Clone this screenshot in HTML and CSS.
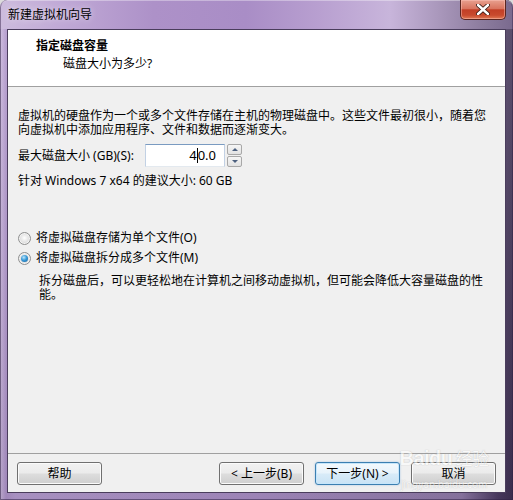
FILE: index.html
```html
<!DOCTYPE html>
<html lang="zh-CN">
<head>
<meta charset="utf-8">
<title>新建虚拟机向导</title>
<link rel="stylesheet" href="styles.css">
</head>
<body>
<div class="window">
  <div class="titlebar">
    <span class="title">新建虚拟机向导</span>
    <button class="close" type="button" aria-label="关闭">
      <svg width="14" height="11" viewBox="0 0 14 11"><path d="M2 1 L12 10 M12 1 L2 10" stroke="#3a1a14" stroke-width="4.2" stroke-linecap="round"/><path d="M2 1 L12 10 M12 1 L2 10" stroke="#ffffff" stroke-width="2.4" stroke-linecap="round"/></svg>
    </button>
  </div>
  <div class="client">
    <div class="header">
      <div class="h-title">指定磁盘容量</div>
      <div class="h-sub">磁盘大小为多少?</div>
    </div>
    <div class="body">
      <p class="para">虚拟机的硬盘作为一个或多个文件存储在主机的物理磁盘中。这些文件最初很小，随着您向虚拟机中添加应用程序、文件和数据而逐渐变大。</p>
      <div class="size-row">
        <label class="size-label">最大磁盘大小 (GB)(S):</label>
        <div class="spin">
          <div class="spin-input">4<span class="caret"></span>0.0</div>
          <div class="spin-btns">
            <span class="spin-btn"><i class="tri up"></i></span>
            <span class="spin-btn"><i class="tri down"></i></span>
          </div>
        </div>
      </div>
      <div class="recommend">针对 Windows 7 x64 的建议大小: 60 GB</div>
      <div class="radio-row first"><span class="radio"></span><span>将虚拟磁盘存储为单个文件(O)</span></div>
      <div class="radio-row second"><span class="radio checked"></span><span>将虚拟磁盘拆分成多个文件(M)</span></div>
      <p class="desc">拆分磁盘后，可以更轻松地在计算机之间移动虚拟机，但可能会降低大容量磁盘的性能。</p>
    </div>
    <div class="footer">
      <button class="btn" type="button">帮助</button>
      <div class="spacer"></div>
      <button class="btn" type="button">&lt; 上一步(B)</button>
      <button class="btn default" type="button">下一步(N) &gt;</button>
      <button class="btn" type="button">取消</button>
    </div>
  </div>
  <div class="watermark" aria-hidden="true">
    <span class="wm-big">Bai<span class="wm-du">du</span><span class="wm-cn">经验</span></span>
    <span class="wm-small">jingyan.baidu.com</span>
  </div>
</div>
</body>
</html>
```

FILE: styles.css
```css
* { box-sizing: border-box; }
html, body { margin: 0; padding: 0; background: #dcdcdc; }
body {
  font-family: "Noto Sans", "Noto Sans CJK SC", sans-serif;
  font-size: 12px;
  line-height: 14px;
  color: #000;
}
.window {
  position: relative;
  width: 513px;
  height: 500px;
  padding: 0 7px 7px 7px;
  display: flex;
  flex-direction: column;
  border-radius: 7px 7px 0 0;
  background:
    linear-gradient(to bottom, rgba(255,255,255,0.15), rgba(0,0,0,0.08)),
    linear-gradient(to right, #c9b6dc 0, #ad92c9 1.2%, #b59cd0 3%, #a98ec5 50%, #8f7aa8 90%, #4c3c63 97%, #3e3052 100%);
  box-shadow: inset 0 0 0 1px rgba(50,35,70,0.55);
  overflow: hidden;
}
.titlebar {
  height: 29px;
  margin: 0 -7px;
  padding: 0 7px 0 8px;
  display: flex;
  justify-content: space-between;
  align-items: flex-start;
  background: linear-gradient(to right, #cdbcdd 0%, #c0a9d6 12%, #ad91c8 30%, #a98dc6 48%, #b89fd0 62%, #c8b5db 76%, #a896ba 86%, #8c7c9e 94%, #7a6a8e 100%);
  border-radius: 7px 7px 0 0;
  box-shadow: inset 0 1px 0 rgba(255,255,255,0.35), inset 1px 0 0 rgba(60,40,80,0.5), inset -1px 0 0 rgba(60,40,80,0.5);
}
.title {
  padding-top: 8px;
  line-height: 14px;
  text-shadow: 0 0 6px rgba(255,255,255,0.7);
}
.close {
  width: 46px;
  height: 20px;
  padding: 0;
  border: 1px solid #5a2620;
  border-top: none;
  border-radius: 0 0 5px 5px;
  background: linear-gradient(to bottom, #e8a08f 0%, #d9745f 45%, #c23f26 52%, #c84a2e 80%, #e07a55 100%);
  box-shadow: inset 0 0 0 1px rgba(255,200,190,0.45);
  display: flex;
  align-items: center;
  justify-content: center;
}
.client {
  flex: 1;
  display: flex;
  flex-direction: column;
  background: #f0f0f0;
  border: 1px solid #4a3d5c;
}
.header {
  height: 57px;
  background: #fff;
  border-bottom: 1px solid #a0a0a0;
  padding: 8px 0 0 28px;
}
.h-title {
  font-weight: 700;
  line-height: 15px;
}
.h-sub {
  margin-top: 3px;
  padding-left: 27px;
  line-height: 15px;
}
.body {
  padding: 22px 0 0 10px;
}
.para {
  margin: 0;
  width: 474px;
}
.size-row {
  margin-top: 7px;
  display: flex;
  align-items: center;
}
.size-label {
  width: 127px;
  white-space: nowrap;
}
.spin {
  display: flex;
  align-items: stretch;
  height: 23px;
}
.spin-input {
  width: 80px;
  border: 1px solid #abadb3;
  border-top-color: #7a9bc1;
  border-left-color: #c2d1e4;
  border-right-color: #c2d1e4;
  border-bottom-color: #e3e9ef;
  background: #fff;
  text-align: right;
  padding: 3px 8px 0 0;
  line-height: 15px;
  font-size: 13px;
  font-family: "Noto Sans", sans-serif;
}
.caret {
  display: inline-block;
  width: 1px;
  height: 15px;
  background: #000;
  vertical-align: -3px;
}
.spin-btns {
  margin-left: 2px;
  width: 15px;
  display: flex;
  flex-direction: column;
  gap: 1px;
}
.spin-btn {
  flex: 1;
  border: 1px solid #a8a8a8;
  border-radius: 2px;
  background: linear-gradient(to bottom, #f6f6f6, #e2e2e2);
  display: flex;
  align-items: center;
  justify-content: center;
}
.tri {
  width: 0;
  height: 0;
  border-left: 3px solid transparent;
  border-right: 3px solid transparent;
}
.tri.up { border-bottom: 3px solid #4c607f; }
.tri.down { border-top: 3px solid #4c607f; }
.recommend {
  margin-top: 7px;
}
.radio-row {
  display: flex;
  align-items: center;
  gap: 5px;
  height: 14px;
}
.radio-row.first { margin-top: 43px; }
.radio-row.second { margin-top: 6px; }
.radio {
  width: 13px;
  height: 13px;
  border-radius: 50%;
  border: 1px solid #8e8f8f;
  background: radial-gradient(circle at 50% 45%, #ffffff 0, #e6e6e6 45%, #c9c9c9 100%);
  box-shadow: inset 0 0 0 1px #f4f4f4;
  display: flex;
  align-items: center;
  justify-content: center;
  flex: none;
}
.radio.checked::after {
  content: "";
  width: 7px;
  height: 7px;
  border-radius: 50%;
  background: radial-gradient(circle at 40% 35%, #bfe6fb 0, #3a9bd8 45%, #0f5d9b 100%);
}
.desc {
  margin: 9px 0 0 21px;
  width: 452px;
}
.footer {
  margin-top: auto;
  border-top: 1px solid #a0a0a0;
  padding: 8px 9px 7px 9px;
  display: flex;
  gap: 11px;
}
.spacer { flex: 1; }
.btn {
  width: 85px;
  height: 23px;
  padding: 0;
  font: inherit;
  line-height: 14px;
  color: #000;
  border: 1px solid #707070;
  border-radius: 3px;
  background: linear-gradient(to bottom, #f2f2f2 0%, #ebebeb 48%, #dddddd 52%, #cfcfcf 100%);
  box-shadow: inset 0 0 0 1px #fbfbfb;
}
.btn.default {
  border-color: #3c7fb1;
  background: linear-gradient(to bottom, #f3f9fd 0%, #e8f3fb 48%, #d8ebf8 52%, #c9e3f5 100%);
  box-shadow: inset 0 0 0 1px #c6e6fb, 0 0 2px rgba(60,140,210,0.45);
}
.watermark {
  position: absolute;
  left: 394px;
  top: 444px;
  width: 100px;
  display: flex;
  flex-direction: column;
  align-items: center;
  white-space: nowrap;
  color: #fff;
  opacity: 0.55;
  pointer-events: none;
}
.wm-big {
  display: flex;
  align-items: baseline;
  font-family: "Liberation Sans", sans-serif;
  font-weight: 700;
  font-size: 20px;
  line-height: 28px;
  letter-spacing: -0.5px;
  text-shadow: 0 0 1px rgba(120,120,120,0.9);
}
.wm-cn {
  margin-left: 3px;
  font-family: "Noto Sans CJK SC", sans-serif;
  font-weight: 400;
  font-size: 17px;
}
.wm-small {
  margin-top: 6px;
  font-size: 10px;
  line-height: 12px;
  text-shadow: 0 0 1px rgba(120,120,120,0.9);
}
```
